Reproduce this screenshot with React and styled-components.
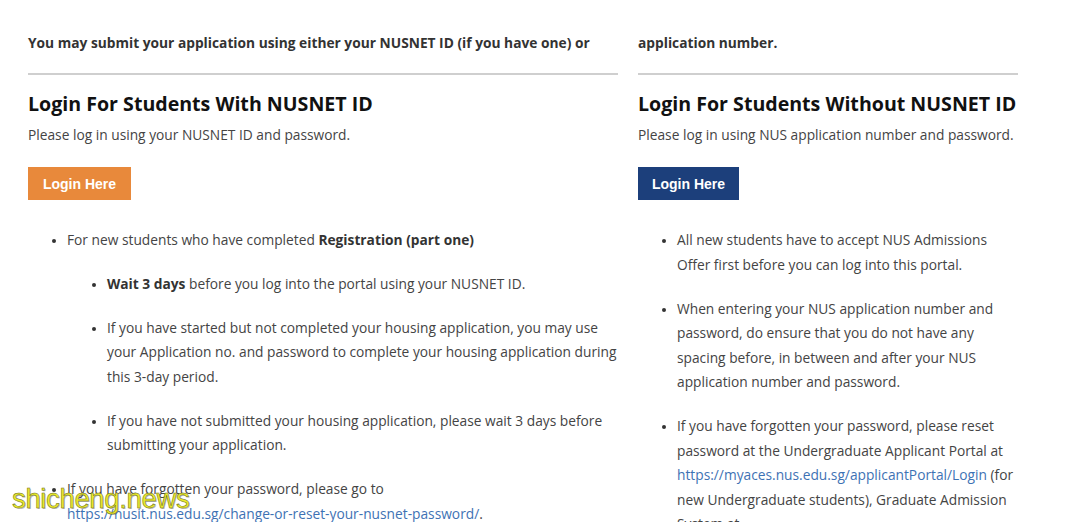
import React from "react";
import styled, { createGlobalStyle } from "styled-components";

const Global = createGlobalStyle`
  html, body { margin: 0; padding: 0; background: #fff; }
  body { font-family: "Open Sans", "Noto Sans", sans-serif; color: #444; overflow: hidden; }
  #root { width: 1080px; height: 522px; overflow: hidden; position: relative; }
`;

const Page = styled.div`
  display: grid;
  grid-template-columns: 590px 380px;
  column-gap: 20px;
  padding: 33px 0 0 28px;
`;

const Column = styled.section`
  display: flex;
  flex-direction: column;
`;

const Intro = styled.p`
  margin: 0;
  font-size: 13.75px;
  font-weight: 700;
  color: #333;
  line-height: 20px;
  white-space: nowrap;
`;

const Rule = styled.hr`
  border: 0;
  height: 2px;
  background: #cfcfcf;
  margin: 20px 0 0;
  width: 100%;
`;

const Heading = styled.h2`
  margin: 15px 0 0;
  font-size: 19.6px;
  font-weight: 700;
  color: #111;
  line-height: 28px;
  white-space: nowrap;
`;

const Sub = styled.p`
  margin: 7px 0 0;
  font-size: 13.75px;
  line-height: 20px;
  color: #444;
`;

const Button = styled.a`
  display: inline-flex;
  align-items: center;
  justify-content: center;
  align-self: flex-start;
  margin-top: 22px;
  width: ${(p) => p.$w}px;
  height: 33px;
  background: ${(p) => p.$bg};
  color: #fff;
  font-family: "Liberation Sans", Arial, sans-serif;
  font-weight: 700;
  font-size: 14px;
  text-decoration: none;
`;

const List = styled.ul`
  margin: ${(p) => (p.$nested ? "19px 0 0" : "28px 0 0")};
  padding: 0 0 0 ${(p) => p.$indent}px;
  list-style: disc;
  font-size: 13.75px;
  line-height: 24.5px;
  color: #444;
`;

const Item = styled.li`
  & + & { margin-top: 19.5px; }
  &::marker { font-size: 11px; color: #333; }
`;

const B = styled.strong`
  font-weight: 700;
  color: #333;
`;

const Link = styled.a`
  color: #3e72b4;
  text-decoration: none;
  white-space: ${(p) => (p.$nowrap ? "nowrap" : "normal")};
`;

const Watermark = styled.div`
  position: absolute;
  left: 12px;
  top: 483px;
  font-family: "Liberation Sans", Arial, sans-serif;
  font-size: 27.6px;
  letter-spacing: -0.4px;
  color: #eaea2c;
  -webkit-text-stroke: 0.5px #6b6b20;
  text-shadow: 1px 1px 0 rgba(60, 60, 20, 0.35);
  pointer-events: none;
`;

export default function App() {
  return (
    <>
      <Global />
      <Page>
        <Column>
          <Intro>You may submit your application using either your NUSNET ID (if you have one) or</Intro>
          <Rule />
          <Heading>Login For Students With NUSNET ID</Heading>
          <Sub>Please log in using your NUSNET ID and password.</Sub>
          <Button $bg="#e8893b" $w={103}>Login Here</Button>
          <List $indent={39}>
            <Item>
              For new students who have completed <B>Registration (part one)</B>
              <List $nested $indent={40}>
                <Item><B>Wait 3 days</B> before you log into the portal using your NUSNET ID.</Item>
                <Item>If you have started but not completed your housing application, you may use your Application no. and password to complete your housing application during this 3-day period.</Item>
                <Item>If you have not submitted your housing application, please wait 3 days before submitting your application.</Item>
              </List>
            </Item>
            <Item>
              If you have forgotten your password, please go to{" "}
              <Link $nowrap>https://nusit.nus.edu.sg/change-or-reset-your-nusnet-password/</Link>.
            </Item>
          </List>
        </Column>
        <Column>
          <Intro>application number.</Intro>
          <Rule />
          <Heading>Login For Students Without NUSNET ID</Heading>
          <Sub>Please log in using NUS application number and password.</Sub>
          <Button $bg="#1c3f7b" $w={101}>Login Here</Button>
          <List $indent={39}>
            <Item>All new students have to accept NUS Admissions Offer first before you can log into this portal.</Item>
            <Item>When entering your NUS application number and password, do ensure that you do not have any spacing before, in between and after your NUS application number and password.</Item>
            <Item>
              If you have forgotten your password, please reset password at the Undergraduate Applicant Portal at{" "}
              <Link $nowrap>https://myaces.nus.edu.sg/applicantPortal/Login</Link> (for new Undergraduate students), Graduate Admission System at
            </Item>
          </List>
        </Column>
      </Page>
      <Watermark>shicheng.news</Watermark>
    </>
  );
}
